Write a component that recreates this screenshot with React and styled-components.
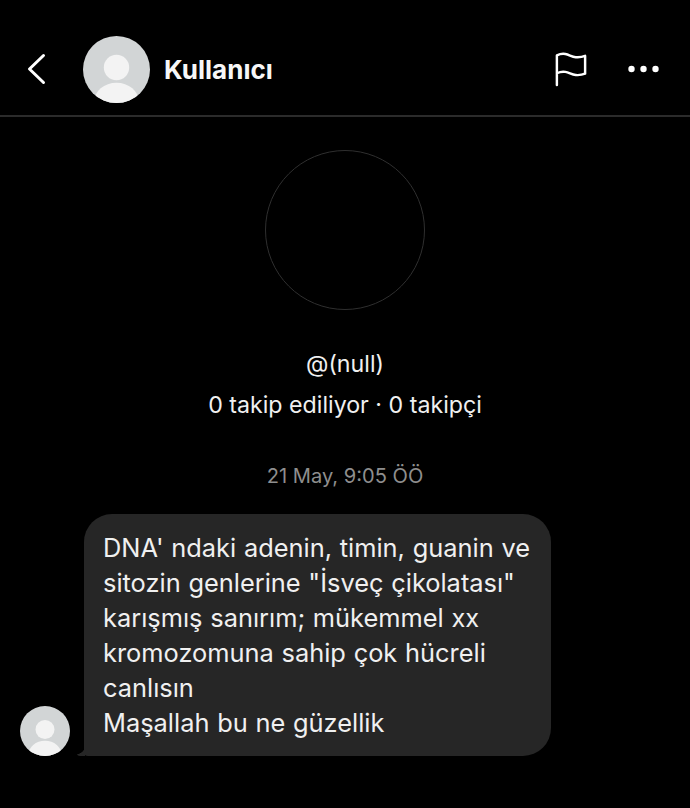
import React from 'react';
import styled, { createGlobalStyle } from 'styled-components';

const GlobalStyle = createGlobalStyle`
  html, body {
    margin: 0;
    padding: 0;
    background: #000;
  }
  body {
    font-family: Inter, "Liberation Sans", sans-serif;
    color: #fff;
  }
`;

const Page = styled.div`
  width: 690px;
  height: 808px;
  background: #000;
  overflow: hidden;
`;

const Header = styled.header`
  display: flex;
  align-items: center;
  height: 117px;
  box-sizing: border-box;
  padding: 23px 30px 0 27px;
  border-bottom: 2px solid #2b2b2b;
`;

const BackButton = styled.div`
  display: flex;
  width: 20px;
  margin-right: 36px;
`;

const Name = styled.div`
  flex: 1;
  margin-left: 14px;
  font-size: 26px;
  font-weight: 700;
  color: #f7f7f7;
`;

const Actions = styled.div`
  display: flex;
  align-items: center;
  gap: 40px;
`;

const AvatarWrap = styled.div`
  flex: none;
  width: ${p => p.$size}px;
  height: ${p => p.$size}px;
`;

const Profile = styled.section`
  display: flex;
  flex-direction: column;
  align-items: center;
  padding-top: 33px;
`;

const EmptyPhoto = styled.div`
  width: 160px;
  height: 160px;
  box-sizing: border-box;
  border: 1px solid #2f2f2f;
  border-radius: 50%;
`;

const Handle = styled.div`
  margin-top: 39px;
  font-size: 23.2px;
  line-height: 30px;
  color: #f0f0f0;
`;

const Stats = styled.div`
  margin-top: 11px;
  font-size: 23.2px;
  line-height: 30px;
  color: #f0f0f0;
`;

const Stamp = styled.div`
  margin-top: 43px;
  font-size: 20.1px;
  line-height: 26px;
  color: #8e8e8e;
`;

const MessageRow = styled.div`
  display: flex;
  align-items: flex-end;
  gap: 14px;
  margin-top: 25px;
  padding-left: 20px;
`;

const Bubble = styled.div`
  position: relative;
  width: 467px;
  height: 242px;
  box-sizing: border-box;
  padding: 16px 10px 0 19px;
  background: #262626;
  border-radius: 28px 28px 28px 4px;
  font-size: 25.4px;
  word-spacing: 0.6px;
  line-height: 35px;
  color: #f0f0f0;
  white-space: nowrap;

  &::before {
    content: '';
    position: absolute;
    left: -7px;
    bottom: 0;
    width: 8px;
    height: 11px;
    background: radial-gradient(circle at -1px 0, transparent 9px, #262626 9.5px);
    border-bottom-left-radius: 3px;
  }
`;

const UserAvatar = ({ size }) => (
  <AvatarWrap $size={size}>
    <svg width={size} height={size} viewBox="0 0 66 66">
      <defs>
        <clipPath id={`clip-${size}`}>
          <circle cx="33" cy="33" r="33" />
        </clipPath>
      </defs>
      <circle cx="33" cy="33" r="33" fill="#d2d5d6" />
      <g clipPath={`url(#clip-${size})`}>
        <circle cx="33" cy="31" r="12.5" fill="#f3f3f3" />
        <ellipse cx="33" cy="65" rx="22" ry="19" fill="#f3f3f3" />
      </g>
    </svg>
  </AvatarWrap>
);

const App = () => (
  <Page>
    <GlobalStyle />
    <Header>
      <BackButton>
        <svg width="20" height="32" viewBox="0 0 20 32" fill="none" stroke="#fff" strokeWidth="3" strokeLinecap="round" strokeLinejoin="round">
          <path d="M16.500 2.500 2.500 16l14 13.500" />
        </svg>
      </BackButton>
      <UserAvatar size={67} />
      <Name>Kullanıcı</Name>
      <Actions>
        <svg width="32" height="35" viewBox="0 0 34 36" fill="none" stroke="#fff" strokeWidth="2.6" strokeLinecap="round" strokeLinejoin="round">
          <path d="M2 34.500V3c3-1.500 6-2 9-1.500 4 .8 7 3 11 3.400 3.500.3 7-.2 10-1.400v19c-3 1.200-6.500 1.700-10 1.400-4-.4-7-2.600-11-3.400-3-.5-6 0-9 1.500" />
        </svg>
        <svg width="33" height="10" viewBox="0 0 33 10" fill="#fff">
          <circle cx="4.500" cy="5" r="3.200" />
          <circle cx="16.500" cy="5" r="3.200" />
          <circle cx="28.500" cy="5" r="3.200" />
        </svg>
      </Actions>
    </Header>
    <Profile>
      <EmptyPhoto />
      <Handle>@(null)</Handle>
      <Stats>0 takip ediliyor · 0 takipçi</Stats>
      <Stamp>21 May, 9:05 ÖÖ</Stamp>
    </Profile>
    <MessageRow>
      <UserAvatar size={50} />
      <Bubble>
        DNA' ndaki adenin, timin, guanin ve<br />
        sitozin genlerine "İsveç çikolatası"<br />
        karışmış sanırım; mükemmel xx<br />
        kromozomuna sahip çok hücreli<br />
        canlısın<br />
        Maşallah bu ne güzellik
      </Bubble>
    </MessageRow>
  </Page>
);

export default App;
